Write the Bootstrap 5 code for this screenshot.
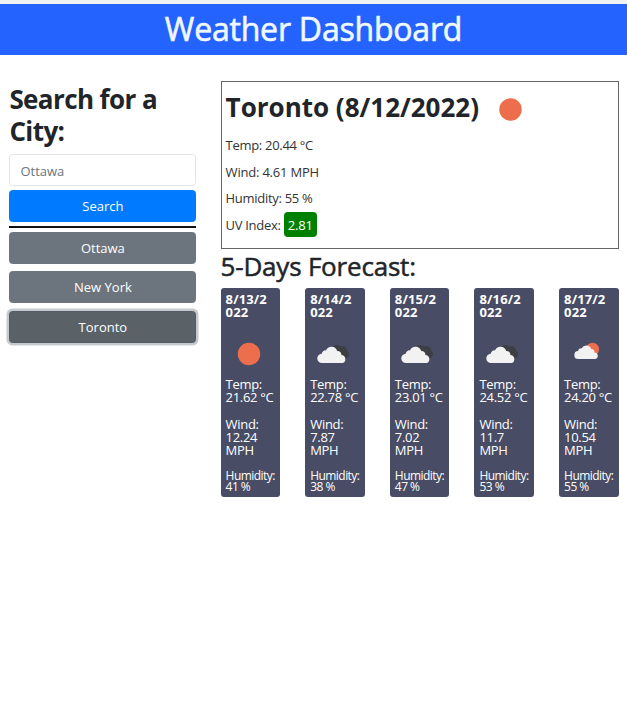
<!DOCTYPE html>
<html lang="en">
<head>
<meta charset="utf-8">
<meta name="viewport" content="width=device-width, initial-scale=1">
<title>Weather Dashboard</title>
<link href="https://cdn.jsdelivr.net/npm/bootstrap@5.3.0/dist/css/bootstrap.min.css" rel="stylesheet">
<style>
body{font-family:"Open Sans","Noto Sans",sans-serif;font-size:13px;color:#212529;background:#fff}
.site-head{border-top:4px solid #eff3f4;background:#2563ff;height:55px}
.site-head h1{font-size:32px;font-weight:500;line-height:49px;color:#f0f8ff;letter-spacing:-.2px;-webkit-text-stroke:.6px #f0f8ff}
.side{width:187px;margin-left:9.400px;padding-top:28px}
.side h2{font-size:26px;font-weight:700;line-height:32px;margin-bottom:7px;letter-spacing:-.6px}
.side .form-control,.side .btn{height:32px;font-size:13px;line-height:18px;border-radius:3.5px;padding:6px 10px}
.side .form-control{border-color:#e3e6e9;padding-top:7px;padding-bottom:5px}
.side .form-control::placeholder{color:#6c757d}
.btn-search{background:#007bff;border-color:#007bff;color:#fff;margin-top:4px}
.rule{height:2px;background:#111;margin:4px 0 3.500px}
.btn-city{background:#6c757d;border-color:#6c757d;color:#fff}
.btn-city.active{background:#5a6268!important;border-color:#545b62!important;color:#fff!important;box-shadow:0 0 0 2.5px #c6cacd}
.cities{gap:7.5px}
.main{margin-left:24.200px;width:398px;padding-top:26px}
.today{border:1px solid #666;height:168px;padding:9px 4px 0}
.today h2{font-size:26px;font-weight:700;line-height:32px;margin:0}
.today p{margin:0;line-height:26.6px;color:#333;letter-spacing:-.3px}
.today .mph{letter-spacing:-.2px}
.today .readings{padding-top:9px}
.today .sun{margin-left:19.500px;margin-top:4px}
.uv{display:inline-block;background:#008000;color:#fff;line-height:18px;padding:3.500px 4px;border-radius:4px;letter-spacing:-.1px}
.main h3{font-size:26px;font-weight:500;line-height:32px;margin:1px 0 5.500px;letter-spacing:-.2px;-webkit-text-stroke:.5px #212529}
.day{width:59.500px;height:209.5px;background:#484c65;color:#fff;border-radius:3px;padding:5.500px 0 0 5px;line-height:13.2px}
.day h4{font-size:13px;font-weight:700;line-height:13.2px;margin:0;height:27px;letter-spacing:.15px}
.day svg{display:block;margin:0 0 0 3.500px}
.day p{margin:0 0 13.3px;letter-spacing:-.3px}
.day .hum{font-size:12px;line-height:11px;letter-spacing:-.55px;white-space:nowrap;margin:-.800px 0 0}
</style>
<script src="https://cdn.jsdelivr.net/npm/bootstrap@5.3.0/dist/js/bootstrap.bundle.min.js" defer></script>
</head>
<body>
<svg width="0" height="0" class="position-absolute" aria-hidden="true">
<symbol id="sun" viewBox="0 0 40 40"><circle cx="20" cy="20" r="11.2" fill="#ec6e4c"/></symbol>
<symbol id="cloudy" viewBox="0 0 40 40"><path d="M17 15a6 6 0 0 1 9.500-2.500a5 5 0 0 1 7 4.500a4 4 0 0 1-1 7H20z" fill="#3e3f45"/><path d="M8.500 29.500a4.600 4.600 0 0 1-.3-9.200a3.700 3.700 0 0 1 4.300-3.400a6 6 0 0 1 11.200.6a3.800 3.800 0 0 1 4.200 4a4.200 4.200 0 0 1 1.500 8z" fill="#f2f2f2" transform="translate(-.5 -.5)"/></symbol>
<symbol id="partly" viewBox="0 0 40 40"><circle cx="24.500" cy="15.200" r="6.500" fill="#ec6e4c"/><path d="M10.500 25a4 4 0 0 1-.3-8a3 3 0 0 1 3.500-2.800a5.200 5.200 0 0 1 9.500.8a3.400 3.400 0 0 1 3.300 3.500a3.300 3.300 0 0 1 .8 6.500z" fill="#f2f2f2"/></symbol>
</svg>
<header class="site-head text-center"><h1 class="m-0">Weather Dashboard</h1></header>
<div class="d-flex">
<aside class="side flex-shrink-0">
<h2>Search for a City:</h2>
<input class="form-control" type="text" placeholder="Ottawa" aria-label="City">
<button class="btn btn-search w-100 d-block">Search</button>
<div class="rule"></div>
<div class="cities d-flex flex-column">
<button class="btn btn-city">Ottawa</button>
<button class="btn btn-city">New York</button>
<button class="btn btn-city active">Toronto</button>
</div>
</aside>
<main class="main flex-shrink-0">
<section class="today">
<div class="d-flex align-items-center"><h2>Toronto (8/12/2022)</h2><svg class="sun" width="23" height="23" viewBox="0 0 23 23"><circle cx="11.500" cy="11.500" r="11.200" fill="#ec6e4c"/></svg></div>
<div class="readings">
<p>Temp: 20.44 °C</p><p class="mph">Wind: 4.61 MPH</p><p>Humidity: 55 %</p><p>UV Index: <span class="uv">2.81</span></p>
</div>
</section>
<h3>5-Days Forecast:</h3>
<div class="d-flex justify-content-between">
<div class="day"><h4>8/13/2<br>022</h4><svg width="40" height="58" viewBox="0 -14 40 58"><use href="#sun" width="40" height="40"/></svg><p>Temp:<br>21.62 °C</p><p>Wind:<br>12.24<br>MPH</p><p class="hum">Humidity:<br>41 %</p></div>
<div class="day"><h4>8/14/2<br>022</h4><svg width="40" height="58" viewBox="0 -14 40 58"><use href="#cloudy" width="40" height="40"/></svg><p>Temp:<br>22.78 °C</p><p>Wind:<br>7.87<br>MPH</p><p class="hum">Humidity:<br>38 %</p></div>
<div class="day"><h4>8/15/2<br>022</h4><svg width="40" height="58" viewBox="0 -14 40 58"><use href="#cloudy" width="40" height="40"/></svg><p>Temp:<br>23.01 °C</p><p>Wind:<br>7.02<br>MPH</p><p class="hum">Humidity:<br>47 %</p></div>
<div class="day"><h4>8/16/2<br>022</h4><svg width="40" height="58" viewBox="0 -14 40 58"><use href="#cloudy" width="40" height="40"/></svg><p>Temp:<br>24.52 °C</p><p>Wind:<br>11.7<br>MPH</p><p class="hum">Humidity:<br>53 %</p></div>
<div class="day"><h4>8/17/2<br>022</h4><svg width="40" height="58" viewBox="0 -14 40 58"><use href="#partly" width="40" height="40"/></svg><p>Temp:<br>24.20 °C</p><p>Wind:<br>10.54<br>MPH</p><p class="hum">Humidity:<br>55 %</p></div>
</div>
</main>
</div>
</body>
</html>
